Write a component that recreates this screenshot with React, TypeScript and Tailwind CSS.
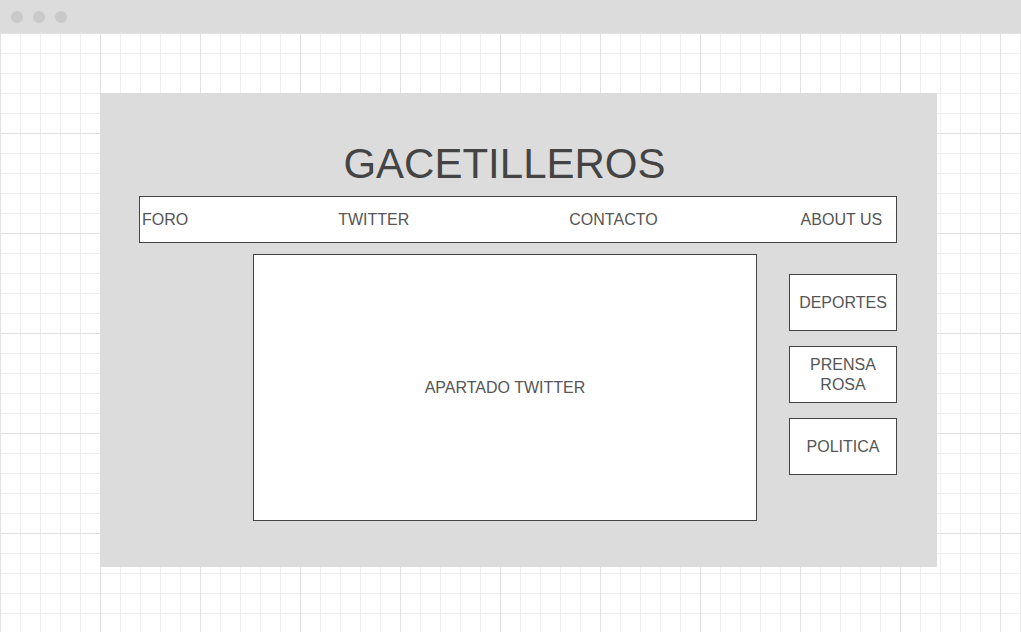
const navItems = [
  { label: "FORO", className: "ml-[2px]" },
  { label: "TWITTER", className: "ml-[150px]" },
  { label: "CONTACTO", className: "ml-[160px]" },
  { label: "ABOUT US", className: "ml-[143px]" },
];

const sections = ["DEPORTES", "PRENSA ROSA", "POLITICA"];

export default function App() {
  return (
    <div className="w-[1021px] h-[632px] overflow-hidden bg-white font-['Liberation_Sans',Arial,sans-serif]">
      {/* Browser chrome */}
      <div className="h-[33px] bg-[#dcdcdc] flex items-center gap-[10px] pl-[11px]">
        <span className="w-[12px] h-[12px] rounded-full bg-[#c9c9c9]" />
        <span className="w-[12px] h-[12px] rounded-full bg-[#c9c9c9]" />
        <span className="w-[12px] h-[12px] rounded-full bg-[#c9c9c9]" />
      </div>

      {/* Grid canvas */}
      <div className="h-[599px] pt-[60px] pl-[100px] bg-[linear-gradient(to_right,#e2e2e2_1px,transparent_1px),linear-gradient(to_bottom,#e2e2e2_1px,transparent_1px),linear-gradient(to_right,#eeeeee_1px,transparent_1px),linear-gradient(to_bottom,#eeeeee_1px,transparent_1px)] bg-[size:100px_100px,100px_100px,20px_20px,20px_20px] bg-[position:0_0,0_0,0_0,0_0]">
        <div className="w-[837px] h-[474px] bg-[#dcdcdc] pt-[47px] pl-[39px] pr-[40px]">
          <h1 className="h-[48px] leading-[48px] text-[42px] text-center text-[#444] pr-[27px]">
            GACETILLEROS
          </h1>

          <nav className="mt-[8px] h-[47px] bg-white border border-[#444] flex items-center text-[16px] text-[#555]">
            {navItems.map((item) => (
              <span key={item.label} className={item.className}>
                {item.label}
              </span>
            ))}
          </nav>

          <div className="mt-[11px] flex justify-end gap-[32px]">
            <div className="w-[504px] h-[267px] bg-white border border-[#444] flex items-center justify-center text-[16px] text-[#555]">
              APARTADO TWITTER
            </div>
            <div className="w-[108px] pt-[20px] flex flex-col gap-[15px]">
              {sections.map((s) => (
                <div
                  key={s}
                  className="h-[57px] bg-white border border-[#444] flex items-center justify-center text-center text-[16px] leading-[20px] text-[#555] px-[16px]"
                >
                  {s}
                </div>
              ))}
            </div>
          </div>
        </div>
      </div>
    </div>
  );
}
